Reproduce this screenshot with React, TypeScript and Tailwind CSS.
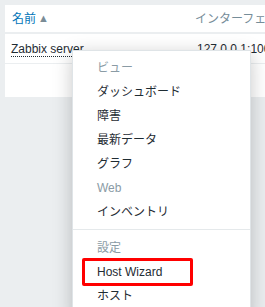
const font = "font-['Liberation_Sans','Noto_Sans_CJK_JP',sans-serif]"

type Item = { label: string; kind: 'head' | 'item' | 'muted' | 'divider'; marked?: boolean }

const items: Item[] = [
  { label: 'ビュー', kind: 'head' },
  { label: 'ダッシュボード', kind: 'item' },
  { label: '障害', kind: 'item' },
  { label: '最新データ', kind: 'item' },
  { label: 'グラフ', kind: 'item' },
  { label: 'Web', kind: 'muted' },
  { label: 'インベントリ', kind: 'item' },
  { label: '', kind: 'divider' },
  { label: '設定', kind: 'head' },
  { label: 'Host Wizard', kind: 'item', marked: true },
  { label: 'ホスト', kind: 'item' },
]

function HostMenu() {
  return (
    <div className="absolute left-[72px] top-[50px] w-[179px] h-[270px] bg-white border border-[#dfe4e7] shadow-[0_4px_18px_rgba(0,0,0,0.22)] pt-[5px]">
      {items.map((it, i) =>
        it.kind === 'divider' ? (
          <div key={i} className="mt-[5px] mb-[6px] h-px bg-[#e5e9eb]" />
        ) : (
          <div
            key={i}
            className={`relative h-6 flex items-center pl-[24px] text-[12px] ${
              it.kind === 'item' ? 'text-[#1f2c33]' : 'text-[#8a9ba5]'
            }`}
          >
            {it.label}
            {it.marked && (
              <span className="absolute left-[9px] top-[-2px] w-[111px] h-[28px] border-[3px] border-[#ff0000] rounded-[2px]" />
            )}
          </div>
        )
      )}
    </div>
  )
}

export default function App() {
  return (
    <div className={`relative w-[265px] h-[307px] overflow-hidden bg-[#ebeef0] pt-[5px] pl-[5px] ${font}`}>
      <div className="w-[300px] bg-white">
        <div className="h-[27px] flex items-center text-[12px]">
          <div className="w-[185px] pl-[7px] flex items-center gap-[2px]">
            <span className="text-[#0275b8]">名前</span>
            <span className="text-[11px] text-[#7a8c96]">▲</span>
          </div>
          <span className="pl-[5px] text-[#768d99]">インターフェース</span>
        </div>
        <div className="h-[2px] bg-[#ebeef0]" />
        <div className="h-[30px] flex items-center text-[12px] text-[#1f2c33] border-b border-[#ebeef0]">
          <div className="w-[186px] pl-[6px]">
            <span className="border-b border-dotted border-[#1f2c33] leading-[14px]">Zabbix server</span>
          </div>
          <span className="pl-[6px]">127.0.0.1:10050</span>
        </div>
        <div className="h-[33px]" />
      </div>
      <HostMenu />
    </div>
  )
}
